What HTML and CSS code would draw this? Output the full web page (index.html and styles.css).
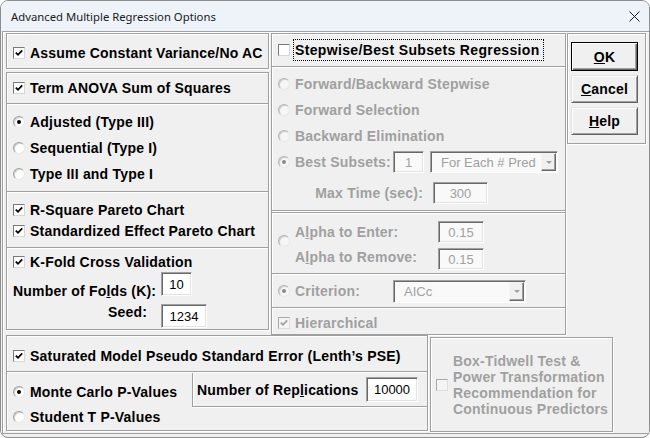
FILE: index.html
```html
<!DOCTYPE html>
<html>
<head>
<meta charset="utf-8">
<title>Advanced Multiple Regression Options</title>
<link rel="stylesheet" href="styles.css">
</head>
<body>
<div class="window">
  <div class="titlebar">
    <span class="title">Advanced Multiple Regression Options</span>
    <svg class="close" width="11" height="11" viewBox="0 0 11 11"><path d="M0.5 0.5 L10.5 10.5 M10.5 0.5 L0.5 10.5" stroke="#1a1a1a" stroke-width="1" fill="none"/></svg>
  </div>
  <div class="client">
    <div class="wrap">
      <div class="toprow">
        <div class="leftcol">
          <div class="frame fa">
            <div class="opt"><span class="cb"><svg viewBox="0 0 10 10"><path d="M1.8 4.6 L4 6.8 L8.2 2.4" stroke="#000" stroke-width="1.8" fill="none"/></svg></span>Assume Constant Variance/No AC</div>
          </div>
          <div class="frame fb">
            <div class="sec sec-term">
              <div class="opt"><span class="cb"><svg viewBox="0 0 10 10"><path d="M1.8 4.6 L4 6.8 L8.2 2.4" stroke="#000" stroke-width="1.8" fill="none"/></svg></span>Term ANOVA Sum of Squares</div>
            </div>
            <div class="sep"></div>
            <div class="sec sec-radios">
              <div class="opt r26"><span class="radio on"></span>Adjusted (Type III)</div>
              <div class="opt r26"><span class="radio"></span>Sequential (Type I)</div>
              <div class="opt r26"><span class="radio"></span>Type III and Type I</div>
            </div>
            <div class="sep"></div>
            <div class="sec sec-pareto">
              <div class="opt r21"><span class="cb"><svg viewBox="0 0 10 10"><path d="M1.8 4.6 L4 6.8 L8.2 2.4" stroke="#000" stroke-width="1.8" fill="none"/></svg></span>R-Square Pareto Chart</div>
              <div class="opt r21"><span class="cb"><svg viewBox="0 0 10 10"><path d="M1.8 4.6 L4 6.8 L8.2 2.4" stroke="#000" stroke-width="1.8" fill="none"/></svg></span>Standardized Effect Pareto Chart</div>
            </div>
            <div class="sep"></div>
            <div class="sec sec-kfold">
              <div class="opt r20"><span class="cb"><svg viewBox="0 0 10 10"><path d="M1.8 4.6 L4 6.8 L8.2 2.4" stroke="#000" stroke-width="1.8" fill="none"/></svg></span>K-Fold Cross Validation</div>
              <div class="kgrid">
                <span class="klabel folds">Number of Fo<u>l</u>ds (K):</span>
                <span class="field w31">10</span>
                <span class="klabel seed">Seed:</span>
                <span class="field w46">1234</span>
              </div>
            </div>
          </div>
        </div>

        <div class="frame midcol">
          <div class="sec sec-step">
            <span class="cb off"></span>
            <span class="focus">Stepwise/Best Subsets Regression</span>
          </div>
          <div class="sep"></div>
          <div class="sec sec-rad dis">
            <div class="opt r26"><span class="radio dis"></span>Forward/Backward Stepwise</div>
            <div class="opt r26"><span class="radio dis"></span>Forward Selection</div>
            <div class="opt r26"><span class="radio dis"></span>Backward Elimination</div>
            <div class="bs">
              <span class="radio dis on"></span>
              <span class="bslabel">Best Subsets:</span>
              <span class="field dfield w31">1</span>
              <span class="dd dd-bs"><span class="ddtxt">For Each # Pred</span><span class="ddbtn"><span class="arrow"></span></span></span>
            </div>
            <div class="mt">
              <span class="mtlabel">Max Time (sec):</span>
              <span class="field dfield w55">300</span>
            </div>
          </div>
          <div class="sep"></div>
          <div class="sep"></div>
          <div class="sec sec-alpha dis">
            <span class="radio dis alpharadio"></span>
            <div class="agrid">
              <span class="alabel a1">A<u>l</u>pha to Enter:</span>
              <span class="field dfield w46">0.15</span>
              <span class="alabel a2">A<u>l</u>pha to Remove:</span>
              <span class="field dfield w46">0.15</span>
            </div>
          </div>
          <div class="sep"></div>
          <div class="sec sec-crit dis">
            <span class="radio dis on"></span>
            <span class="bslabel">Criterion:</span>
            <span class="dd dd-crit"><span class="ddtxt">AICc</span><span class="ddbtn"><span class="arrow"></span></span></span>
          </div>
          <div class="sep"></div>
          <div class="sec sec-hier dis">
            <div class="opt"><span class="cb dis"><svg viewBox="0 0 10 10"><path d="M1.8 4.6 L4 6.8 L8.2 2.4" stroke="#a0a0a0" stroke-width="1.8" fill="none"/></svg></span>Hierarchical</div>
          </div>
        </div>

        <div class="frame btnframe">
          <div class="btn default"><u>O</u>K</div>
          <div class="btn"><u>C</u>ancel</div>
          <div class="btn"><u>H</u>elp</div>
        </div>
      </div>

      <div class="bottomrow">
        <div class="frame satframe">
          <div class="sec sec-sat">
            <div class="opt"><span class="cb"><svg viewBox="0 0 10 10"><path d="M1.8 4.6 L4 6.8 L8.2 2.4" stroke="#000" stroke-width="1.8" fill="none"/></svg></span>Saturated Model Pseudo Standard Error (Lenth’s PSE)</div>
          </div>
          <div class="sep"></div>
          <div class="sec sec-mc">
            <div class="mccol">
              <div class="opt r25"><span class="radio on"></span>Monte Carlo P-Values</div>
              <div class="opt r25"><span class="radio"></span>Student T P-Values</div>
            </div>
            <div class="repbox">
              <span class="replabel">Number of Rep<u>l</u>ications</span>
              <span class="field w52">10000</span>
            </div>
          </div>
        </div>
        <div class="frame boxframe dis">
          <span class="cb dis"></span>
          <span class="boxtext">Box-Tidwell Test &amp;<br>Power Transformation<br>Recommendation for<br>Continuous Predictors</span>
        </div>
      </div>
    </div>
  </div>
</div>
</body>
</html>
```

FILE: styles.css
```css
html, body {
  margin: 0;
  padding: 0;
  background: #ffffff;
}

.window {
  width: 650px;
  height: 438px;
  box-sizing: border-box;
  border: 1px solid #8e8e8e;
  border-radius: 8px;
  overflow: hidden;
  background: #f0f0f0;
  font-family: "Liberation Sans", Arial, sans-serif;
  font-size: 14px;
  font-weight: bold;
  letter-spacing: 0.2px;
  color: #000;
}

.titlebar {
  height: 30px;
  background: #eef3f9;
  display: flex;
  align-items: center;
  padding-left: 10px;
}

.title {
  font-family: "Noto Sans", "Open Sans", sans-serif;
  font-size: 11.3px;
  font-weight: normal;
  letter-spacing: 0;
  color: #1a1a1a;
}

.close {
  margin-left: auto;
  margin-right: 9px;
}

.client {
  background: #f0f0f0;
}

.wrap {
  margin-left: 1px;
  border-left: 1px solid #a0a0a0;
  border-top: 1px solid #a0a0a0;
  border-bottom: 1px solid #a0a0a0;
  box-shadow: inset 1px 1px 0 #fff;
  padding: 1px 0 1px 3px;
}

.frame {
  box-sizing: border-box;
  border: 1px solid #a0a0a0;
  box-shadow: inset 1px 1px 0 #fff, 1px 1px 0 #fff;
}

.sep {
  height: 1px;
  border-top: 1px solid #a0a0a0;
  background: #fff;
  flex: none;
}

.toprow {
  display: flex;
  align-items: flex-start;
}

.leftcol {
  width: 263px;
  display: flex;
  flex-direction: column;
  gap: 3px;
}

.fa {
  height: 36px;
  display: flex;
  align-items: center;
  padding: 4px 0 0 6px;
}

.fb {
  height: 258px;
  display: flex;
  flex-direction: column;
}

.sec {
  box-sizing: border-box;
  flex: none;
}

.opt {
  display: flex;
  align-items: center;
  gap: 5px;
  white-space: nowrap;
  line-height: 16px;
}

.r26 { height: 26px; }
.r25 { height: 25px; }
.r21 { height: 21px; }
.r20 { height: 20px; }

.sec-term {
  height: 30px;
  display: flex;
  align-items: center;
  padding-left: 6px;
}

.sec-radios {
  height: 86px;
  padding: 4px 0 4px 6px;
}

.sec-pareto {
  height: 54px;
  padding: 6px 0 6px 6px;
}

.sec-kfold {
  height: 80px;
  padding: 3px 0 1px 6px;
}

.kgrid {
  display: grid;
  grid-template-columns: 148px auto;
  grid-template-rows: 24px 24px;
  row-gap: 8px;
  justify-items: start;
}

.klabel {
  line-height: 16px;
  white-space: nowrap;
  align-self: start;
}

.klabel.folds {
  margin-top: 11px;
}

.klabel.seed {
  justify-self: end;
  padding-right: 14px;
}

/* checkbox */
.cb {
  width: 12px;
  height: 12px;
  box-sizing: border-box;
  border: 1px solid;
  border-color: #7a7a7a #d6d6d6 #d6d6d6 #7a7a7a;
  background: #fff;
  display: flex;
  align-items: center;
  justify-content: center;
  flex: none;
}

.cb svg {
  width: 10px;
  height: 10px;
  display: block;
}

.cb.dis {
  background: #f4f4f4;
  border-color: #a8a8a8 #dedede #dedede #a8a8a8;
}

/* radio */
.radio {
  width: 12px;
  height: 12px;
  box-sizing: border-box;
  border-radius: 50%;
  border: 1px solid;
  border-color: #a0a0a0 #e8e8e8 #e8e8e8 #a0a0a0;
  background: #fff;
  box-shadow: inset 1px 1px 0 #d0d0d0;
  display: flex;
  align-items: center;
  justify-content: center;
  flex: none;
}

.radio.on::after {
  content: "";
  width: 4px;
  height: 4px;
  border-radius: 50%;
  background: #000;
}

.radio.dis {
  background: #f6f6f6;
  border-color: #b4b4b4 #e8e8e8 #e8e8e8 #b4b4b4;
}

.radio.dis.on::after {
  background: #8a8a8a;
}

/* text fields */
.field {
  box-sizing: border-box;
  height: 24px;
  border: 1px solid;
  border-color: #a0a0a0 #fff #fff #a0a0a0;
  box-shadow: inset 1px 1px 0 #696969, inset -1px -1px 0 #e3e3e3;
  background: #fff;
  font-size: 13px;
  font-weight: normal;
  letter-spacing: 0;
  display: flex;
  align-items: center;
  justify-content: center;
  flex: none;
}

.w31 { width: 31px; }
.w46 { width: 46px; }
.w52 { width: 52px; }
.w55 { width: 55px; }

.dfield {
  height: 22px;
  background: #f9f9f9;
  color: #a0a0a0;
}

.dis {
  color: #a0a0a0;
}

/* middle column */
.midcol {
  width: 295px;
  height: 302px;
  margin-left: 2px;
  display: flex;
  flex-direction: column;
}

.sec-step {
  height: 32px;
  display: flex;
  align-items: center;
  padding-left: 6px;
}

.focus {
  margin-left: 3px;
  padding: 2px 3px 2px 1px;
  border: 1px dotted #000;
  line-height: 16px;
  white-space: nowrap;
  letter-spacing: 0.35px;
}

.sec-rad {
  height: 142px;
  padding: 3px 0 0 6px;
  display: flex;
  flex-direction: column;
}

.bs {
  height: 26px;
  display: flex;
  align-items: center;
  flex: none;
}

.bs .radio {
  margin-right: 5px;
}

.bslabel {
  width: 98px;
  flex: none;
  white-space: nowrap;
  line-height: 16px;
}

.dd {
  box-sizing: border-box;
  height: 22px;
  border: 1px solid;
  border-color: #a0a0a0 #fff #fff #a0a0a0;
  box-shadow: inset 1px 1px 0 #696969;
  background: #f9f9f9;
  display: flex;
  flex: none;
}

.dd-bs {
  width: 128px;
  margin-left: 6px;
}

.dd-crit {
  width: 133px;
  height: 23px;
}

.ddtxt {
  flex: 1;
  display: flex;
  align-items: center;
  padding-left: 10px;
  font-size: 13px;
  font-weight: normal;
  letter-spacing: 0;
  color: #a0a0a0;
  white-space: nowrap;
}

.ddbtn {
  width: 15px;
  box-sizing: border-box;
  margin: 1px 1px 1px 0;
  border: 1px solid;
  border-color: #f4f4f4 #696969 #696969 #f4f4f4;
  box-shadow: inset -1px -1px 0 #a0a0a0;
  background: #f0f0f0;
  display: flex;
  align-items: center;
  justify-content: center;
}

.arrow {
  width: 0;
  height: 0;
  border-left: 3px solid transparent;
  border-right: 3px solid transparent;
  border-top: 3px solid #a0a0a0;
}

.mt {
  height: 24px;
  margin-top: 6px;
  display: flex;
  align-items: center;
  flex: none;
}

.mtlabel {
  width: 155px;
  box-sizing: border-box;
  padding-right: 10px;
  text-align: right;
  white-space: nowrap;
  line-height: 16px;
}

.sec-alpha {
  height: 59px;
  padding: 7px 0 3px 6px;
  display: flex;
  align-items: flex-start;
}

.alpharadio {
  margin-top: 14px;
  margin-right: 5px;
}

.agrid {
  display: grid;
  grid-template-columns: 143px 46px;
  grid-template-rows: 22px 22px;
  row-gap: 5px;
}

.alabel {
  line-height: 16px;
  white-space: nowrap;
  align-self: start;
}

.a1 { margin-top: 3px; }
.a2 { margin-top: 1px; }

.sec-crit {
  height: 32px;
  display: flex;
  align-items: center;
  padding-left: 6px;
}

.sec-crit .radio {
  margin-right: 5px;
}

.sec-hier {
  height: 25px;
  padding: 3px 0 0 6px;
  display: flex;
  align-items: center;
}

/* buttons */
.btnframe {
  width: 79px;
  height: 111px;
  margin-left: 1px;
  padding: 8px 0 0 3px;
  display: flex;
  flex-direction: column;
  gap: 4px;
}

.btn {
  width: 67px;
  height: 28px;
  box-sizing: border-box;
  border: 1px solid;
  border-color: #e3e3e3 #646464 #646464 #e3e3e3;
  box-shadow: inset 1px 1px 0 #fff, inset -1px -1px 0 #a0a0a0;
  background: #f0f0f0;
  display: flex;
  align-items: center;
  justify-content: center;
  line-height: 16px;
  flex: none;
}

.btn.default {
  height: 29px;
  border-color: #000;
  box-shadow: inset 1px 1px 0 #fff, inset -1px -1px 0 #646464, inset -2px -2px 0 #a0a0a0;
}

/* bottom row */
.bottomrow {
  display: flex;
  align-items: flex-start;
}

.satframe {
  width: 422px;
  height: 96px;
  display: flex;
  flex-direction: column;
}

.sec-sat {
  height: 35px;
  padding: 5px 0 0 6px;
  display: flex;
  align-items: center;
}

.sec-mc {
  height: 57px;
  display: flex;
  align-items: flex-start;
}

.mccol {
  width: 185px;
  flex: none;
  box-sizing: border-box;
  padding: 6px 0 0 6px;
}

.repbox {
  flex: 1;
  height: 34px;
  box-sizing: border-box;
  border-left: 1px solid #a0a0a0;
  border-bottom: 1px solid #a0a0a0;
  box-shadow: inset 1px 0 0 #fff, 0 1px 0 #fff;
  display: flex;
  align-items: center;
  padding-left: 4px;
}

.replabel {
  width: 169px;
  flex: none;
  white-space: nowrap;
  line-height: 16px;
}

.repbox .field {
  height: 25px;
}

.boxframe {
  width: 183px;
  height: 95px;
  margin-left: 2px;
  margin-top: 2px;
  display: flex;
  align-items: center;
  padding-left: 5px;
  gap: 5px;
}

.boxtext {
  line-height: 16px;
  white-space: nowrap;
}
```
